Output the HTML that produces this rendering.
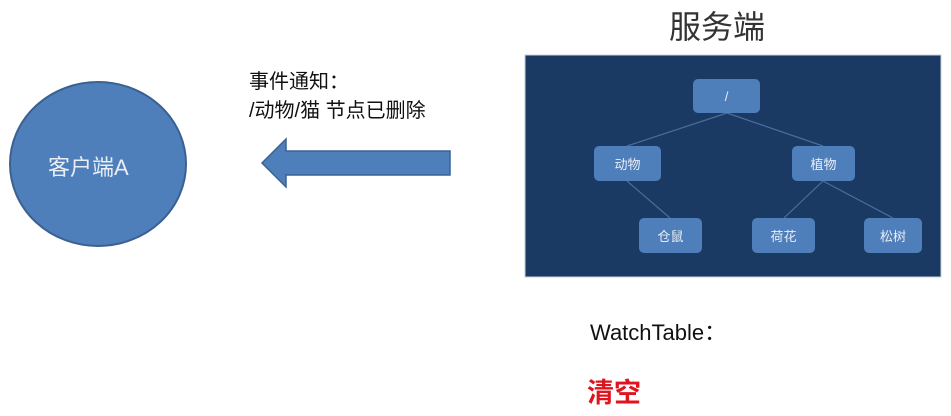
<!DOCTYPE html>
<html><head><meta charset="utf-8"><style>
body{margin:0;width:951px;height:416px;background:#fff;overflow:hidden;position:relative;font-family:"Liberation Sans","Noto Sans CJK SC",sans-serif}
.t{position:absolute;white-space:nowrap}
.n{position:absolute;background:#4f7fba;border-radius:5px;color:#e8eef7;font-size:13px;display:flex;align-items:center;justify-content:center}
</style></head><body>
<div class="t" style="left:669px;top:2px;font-size:32px;color:#333">服务端</div>
<div class="t" style="left:249px;top:68px;font-size:20px;color:#111;line-height:29px">事件通知：<br>/动物/猫 节点已删除</div>
<svg style="position:absolute;left:0;top:0" width="951" height="416">
<ellipse cx="98" cy="164" rx="88" ry="82" fill="#4f7fba" stroke="#3a6192" stroke-width="2"/>
<polygon points="450,151 450,175 286,175 286,187 262,163 286,139 286,151" fill="#4f7fba" stroke="#3a6192" stroke-width="1.5"/>
<rect x="525" y="55" width="416" height="222" fill="#1b3a63" stroke="#c5d0dc" stroke-width="1"/>
<g stroke="#4a6e9c" stroke-width="1.2">
<line x1="727" y1="113" x2="627" y2="146"/><line x1="727" y1="113" x2="823" y2="146"/>
<line x1="627" y1="181" x2="670" y2="218"/><line x1="823" y1="181" x2="784" y2="218"/><line x1="823" y1="181" x2="893" y2="218"/>
</g>
</svg>
<div class="t" style="left:48px;top:150px;font-size:22px;color:#e8eef7">客户端A</div>
<div class="n" style="left:693px;top:79px;width:67px;height:34px">/</div>
<div class="n" style="left:594px;top:146px;width:67px;height:35px">动物</div>
<div class="n" style="left:792px;top:146px;width:63px;height:35px">植物</div>
<div class="n" style="left:639px;top:218px;width:63px;height:35px">仓鼠</div>
<div class="n" style="left:752px;top:218px;width:63px;height:35px">荷花</div>
<div class="n" style="left:864px;top:218px;width:58px;height:35px">松树</div>
<div class="t" style="left:590px;top:315px;font-size:22px;color:#111">WatchTable：</div>
<div class="t" style="left:587px;top:371px;font-size:27px;color:#e0141e;font-weight:bold">清空</div>
</body></html>
